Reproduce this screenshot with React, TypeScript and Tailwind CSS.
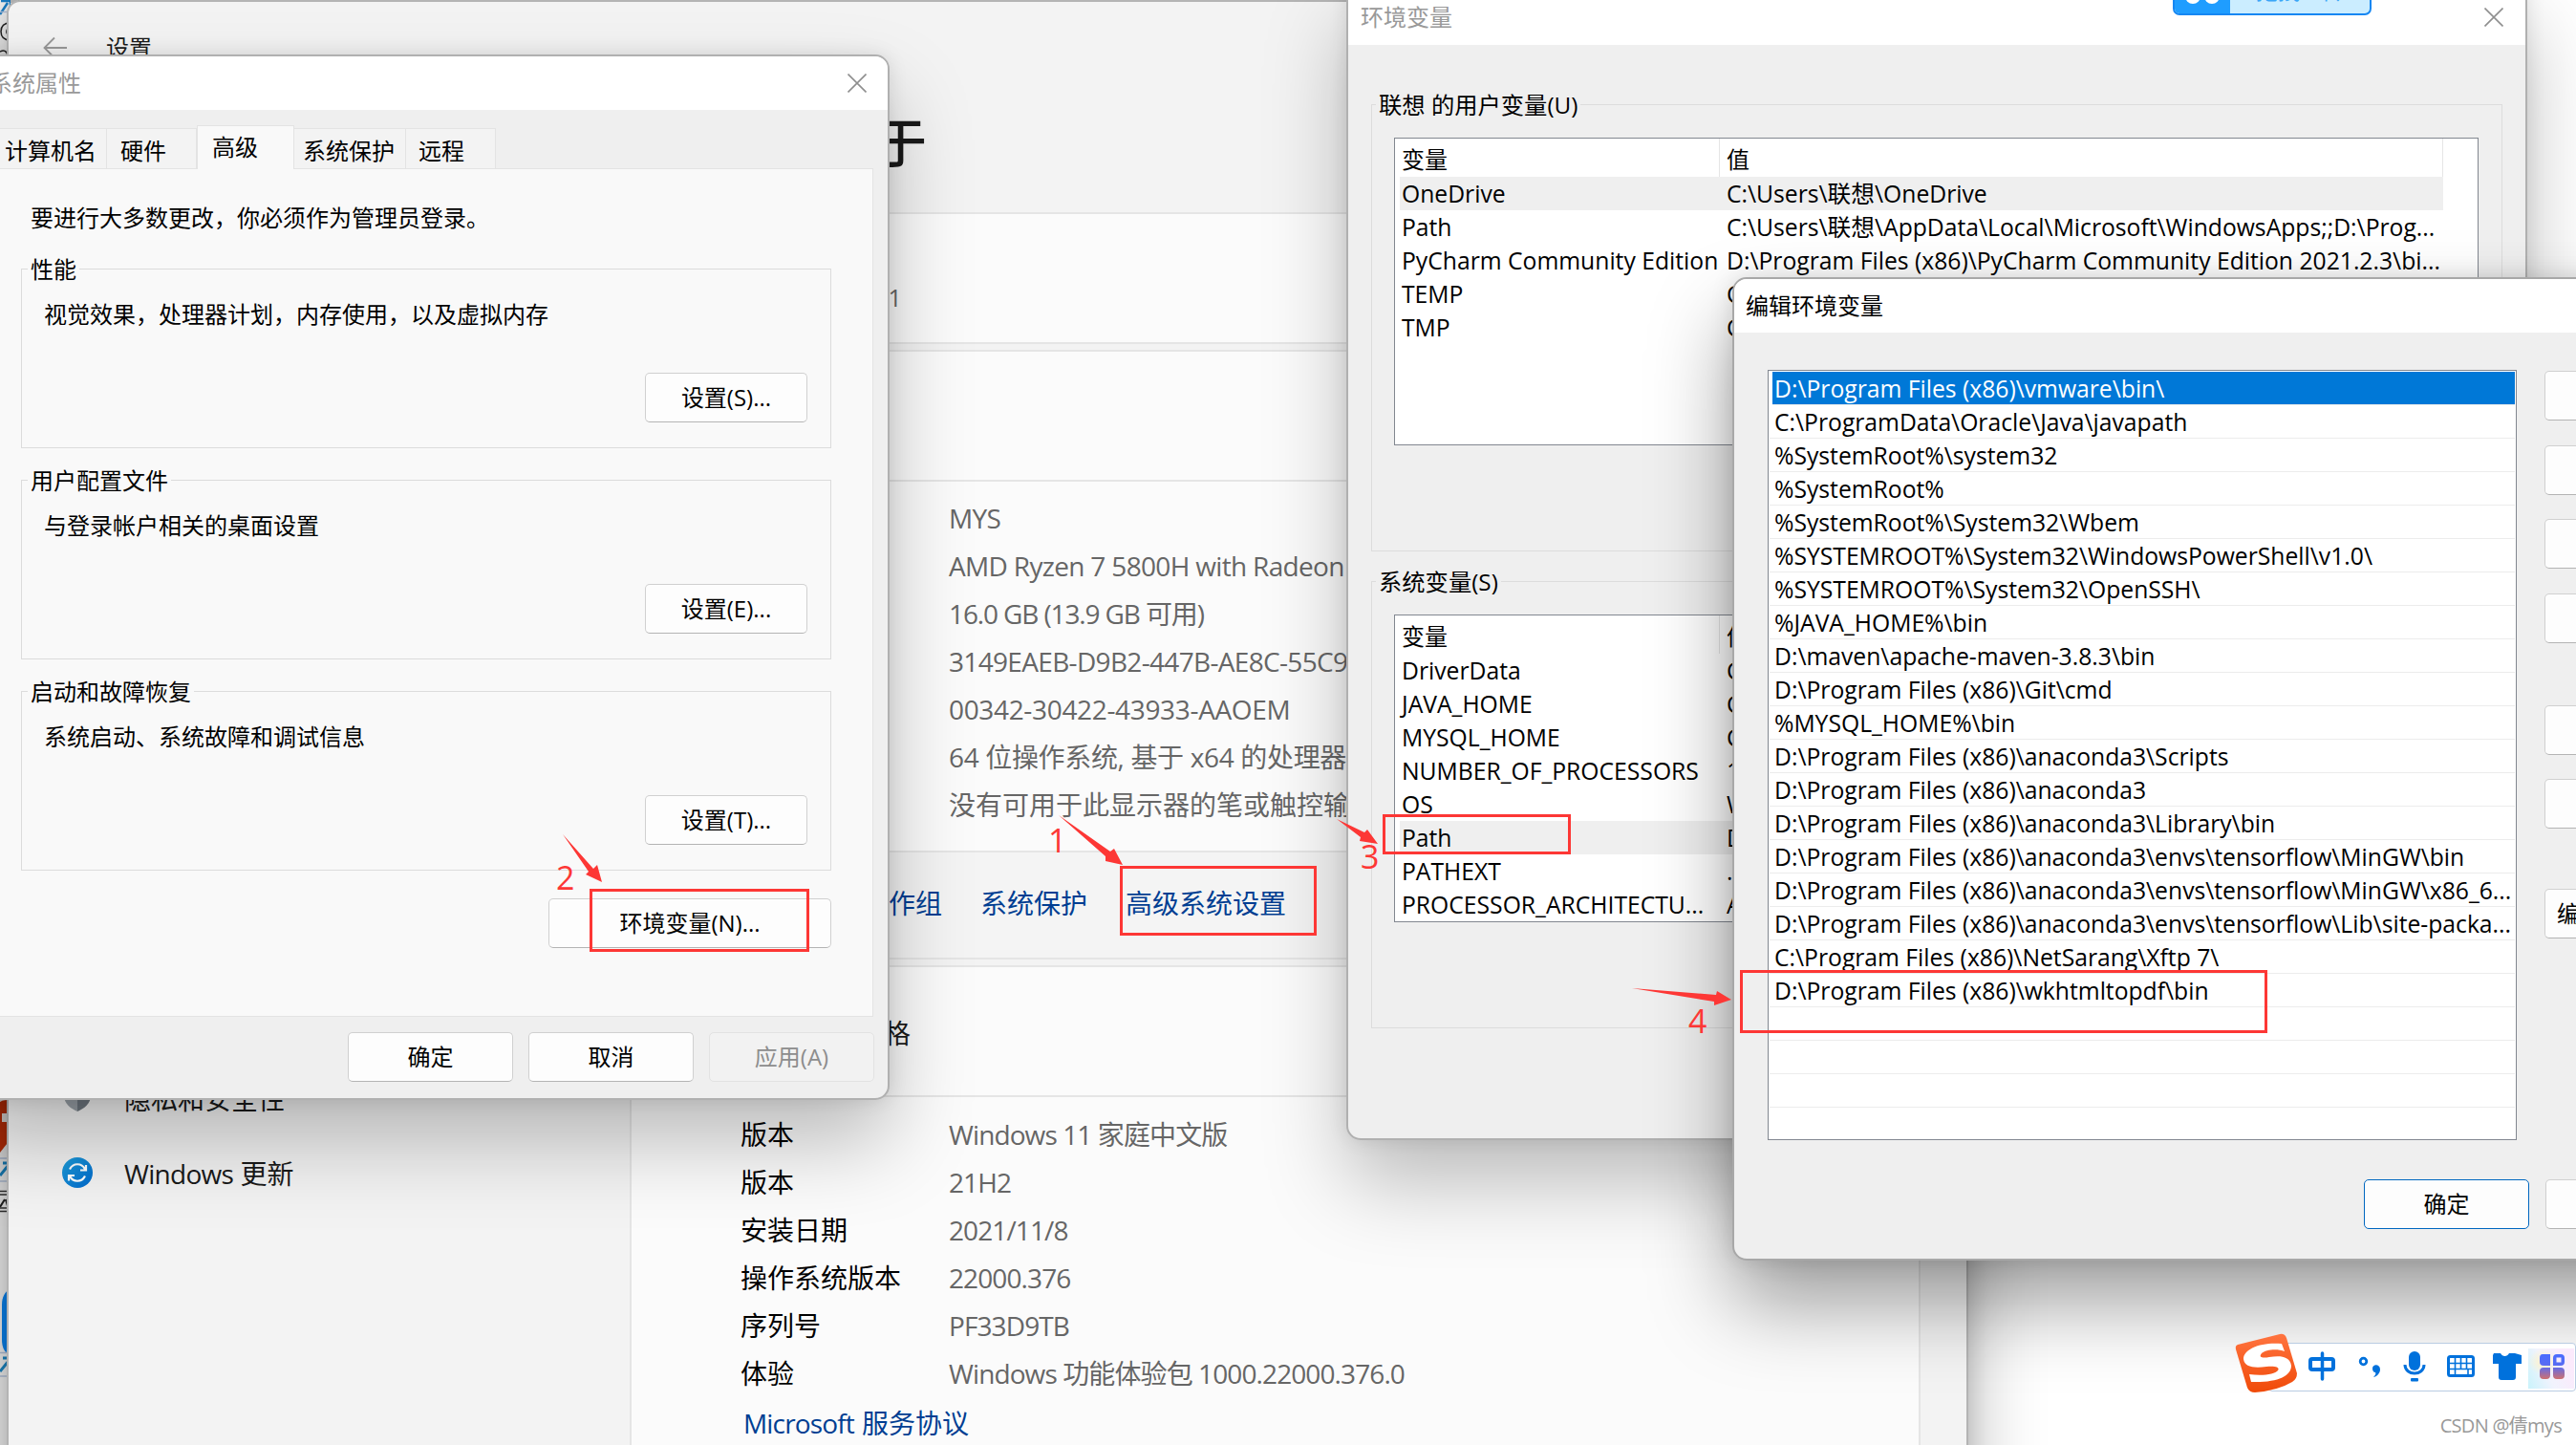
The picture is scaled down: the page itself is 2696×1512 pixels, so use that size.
import type { ReactNode } from "react";
import clsx from "clsx";

const deviceSpecs = [
  { value: "MYS", className: "tracking-[-0.025em]" },
  { value: "AMD Ryzen 7 5800H with Radeon", className: "tracking-[-0.024em]" },
  { value: "16.0 GB (13.9 GB 可用)", className: "tracking-[-0.04em]" },
  { value: "3149EAEB-D9B2-447B-AE8C-55C9", className: "tracking-[-0.024em]" },
  { value: "00342-30422-43933-AAOEM", className: "tracking-[-0.012em]" },
  { value: "64 位操作系统, 基于 x64 的处理器", className: "tracking-[-0.012em]" },
  { value: "没有可用于此显示器的笔或触控输", className: "tracking-normal" },
];

const windowsSpecs = [
  ["版本", "Windows 11 家庭中文版"],
  ["版本", "21H2"],
  ["安装日期", "2021/11/8"],
  ["操作系统版本", "22000.376"],
  ["序列号", "PF33D9TB"],
  ["体验", "Windows 功能体验包 1000.22000.376.0"],
];

const userVariables = [
  ["OneDrive", "C:\\Users\\联想\\OneDrive"],
  ["Path", "C:\\Users\\联想\\AppData\\Local\\Microsoft\\WindowsApps;;D:\\Prog..."],
  [
    "PyCharm Community Edition",
    "D:\\Program Files (x86)\\PyCharm Community Edition 2021.2.3\\bi...",
  ],
  ["TEMP", "C"],
  ["TMP", "C"],
];

const systemVariables = [
  ["DriverData", "C"],
  ["JAVA_HOME", "C"],
  ["MYSQL_HOME", "C"],
  ["NUMBER_OF_PROCESSORS", "1"],
  ["OS", "W"],
  ["Path", "D"],
  ["PATHEXT", ".C"],
  ["PROCESSOR_ARCHITECTU...", "A"],
];

const pathEntries = [
  "D:\\Program Files (x86)\\vmware\\bin\\",
  "C:\\ProgramData\\Oracle\\Java\\javapath",
  "%SystemRoot%\\system32",
  "%SystemRoot%",
  "%SystemRoot%\\System32\\Wbem",
  "%SYSTEMROOT%\\System32\\WindowsPowerShell\\v1.0\\",
  "%SYSTEMROOT%\\System32\\OpenSSH\\",
  "%JAVA_HOME%\\bin",
  "D:\\maven\\apache-maven-3.8.3\\bin",
  "D:\\Program Files (x86)\\Git\\cmd",
  "%MYSQL_HOME%\\bin",
  "D:\\Program Files (x86)\\anaconda3\\Scripts",
  "D:\\Program Files (x86)\\anaconda3",
  "D:\\Program Files (x86)\\anaconda3\\Library\\bin",
  "D:\\Program Files (x86)\\anaconda3\\envs\\tensorflow\\MinGW\\bin",
  "D:\\Program Files (x86)\\anaconda3\\envs\\tensorflow\\MinGW\\x86_6...",
  "D:\\Program Files (x86)\\anaconda3\\envs\\tensorflow\\Lib\\site-packa...",
  "C:\\Program Files (x86)\\NetSarang\\Xftp 7\\",
  "D:\\Program Files (x86)\\wkhtmltopdf\\bin",
  "",
  "",
  "",
  "",
];

const Button = ({
  children,
  className,
}: {
  children?: ReactNode;
  className?: string;
}) => (
  <button
    className={clsx(
      "flex h-[52px] shrink-0 items-center justify-center rounded-[5px] border",
      className ?? "w-[173px] border-[#d0d0d0] border-b-[#b4b4b4] bg-[#fdfdfd]",
    )}
  >
    {children}
  </button>
);

const CloseIcon = () => (
  <svg className="h-5 w-5" viewBox="0 0 20 20" fill="none" stroke="#8f8f8f" strokeWidth="1.6">
    <path d="M0.5 0.5L19.5 19.5M19.5 0.5L0.5 19.5" />
  </svg>
);

const Desktop = () => (
  <>
    <div className="absolute left-0 top-0 flex h-[3px] w-[1411px] bg-[#bdbdbd]">
      <div className="ml-[19px] w-[23px] bg-[#3f8f5e]" />
      <div className="w-[25px] bg-[#c0a04c]" />
      <div className="ml-[84px] w-[14px] bg-[#4f8da8]" />
      <div className="ml-[3px] w-[63px] bg-[#b5b83c]" />
      <div className="ml-[70px] w-[14px] bg-[#4f8da8]" />
      <div className="ml-[3px] w-[27px] bg-[#3d52a0]" />
      <div className="w-[35px] bg-[#333333]" />
      <div className="w-[9px] bg-[#3d52a0]" />
    </div>
    <svg className="absolute left-0 top-0 h-[1512px] w-[11px]" viewBox="0 0 11 1512" fill="none">
      <rect width="11" height="1512" fill="#f4f4f4" />
      <path d="M0 15L8 3M1 1H11V6" stroke="#1a7fc8" strokeWidth="2.5" />
      <path d="M0 12.500H10M0 1212H10M0 1236H10M0 1415.500H10M0 1440H10" stroke="#b4c2dc" strokeWidth="1.500" />
      <path d="M11 24C4 24 1 28 1 33C1 38 4 42 11 42M11 29C6 29 5 37 11 37" stroke="#222" strokeWidth="1.500" />
      <path d="M0 54C4 52 7 53 8 58" stroke="#222" strokeWidth="1.500" />
      <path d="M0 1153C3 1151 7 1151 11 1151V1192L0 1206Z" fill="#c83208" />
      <path d="M2 1165H11V1174H2Z" fill="#f4efec" />
      <path d="M0 1230L9 1219M3 1217H11" stroke="#1b87c5" strokeWidth="3" />
      <path d="M0 1246.500H11M0 1250H11M0 1264H11M0 1267.500H11" stroke="#333" strokeWidth="1.500" />
      <path d="M0 1263L5 1255M6 1255L8 1262L11 1255" stroke="#222" strokeWidth="2" />
      <path d="M11 1348C5 1352 2 1357 2 1365V1402C2 1408 4 1414 7 1415H11Z" fill="#0a84f0" />
      <path d="M0 1435L9 1424M3 1421H11" stroke="#1b87c5" strokeWidth="3" />
    </svg>
  </>
);

const SettingsWindow = () => (
  <div className="absolute left-[7px] top-0 flex h-[1600px] w-[2053px] overflow-hidden rounded-tl-[14px] border-2 border-[#b4b4b4] bg-[#f3f3f3] text-[28px] shadow-[0_30px_80px_rgba(0,0,0,0.3),0_0_24px_rgba(0,0,0,0.15)]">
    <div className="w-[650px] shrink-0">
      <div className="flex h-[95px] items-center gap-10 pl-9">
        <svg className="h-6 w-[26px]" viewBox="0 0 26 24" fill="none" stroke="#999" strokeWidth="1.8">
          <path d="M25 12H2M12 1.500L1.500 12L12 22.500" />
        </svg>
        <span className="text-[24px] text-[#1a1a1a]">设置</span>
      </div>
      <div className="mt-[1014px] flex h-[78px] items-center gap-8 pl-[55px] text-[#1a1a1a]">
        <svg className="h-9 w-[34px]" viewBox="0 0 34 36">
          <path d="M17 0L31 5V14C31 23 24 28 17 31Z" fill="#6f7880" />
          <path d="M17 0L3 5V14C3 23 10 28 17 31Z" fill="#9aa1a8" />
        </svg>
        <span>隐私和安全性</span>
      </div>
      <div className="flex h-[78px] items-center gap-8 pl-[55px] text-[#1a1a1a]">
        <svg className="h-[34px] w-[34px]" viewBox="0 0 34 34" fill="none">
          <defs>
            <linearGradient id="update" x1="0" y1="0" x2="1" y2="1">
              <stop offset="0" stopColor="#1d9fdc" />
              <stop offset="1" stopColor="#0068cc" />
            </linearGradient>
          </defs>
          <circle cx="17" cy="16" r="16" fill="url(#update)" />
          <g stroke="#fff" strokeWidth="2.200">
            <path d="M9 12.500C12.500 5.500 21.500 5.500 25 12.500M26 8V13.500H20" />
            <path d="M25 19.500C21.500 26.500 12.500 26.500 9 19.500M8 24.500V19H14" />
          </g>
        </svg>
        <span>
          <span className="tracking-[-0.025em]">Windows</span> 更新
        </span>
      </div>
    </div>
    <div className="w-[1351px] shrink-0">
      <h1 className="flex h-[220px] items-center pl-[199px] pt-[72px] text-[56px] font-medium text-[#1a1a1a]">
        关于
      </h1>
      <div className="h-[138px] border-2 border-[#e5e5e5] bg-[#fbfbfb] pt-[69px]">
        <p className="w-[282px] text-right text-[25px] tracking-[-0.035em] text-[#666]">21</p>
      </div>
      <div className="mt-[6px] h-[638px] border-2 border-[#e5e5e5] bg-[#fbfbfb]">
        <div className="h-[134px]" />
        <div className="h-[390px] border-y-2 border-[#e5e5e5] pl-[332px] pt-[13px] text-[#666]">
          {deviceSpecs.map(({ value, className }) => (
            <p
              key={value}
              className={clsx("h-[50px] whitespace-nowrap leading-[50px]", className)}
            >
              {value}
            </p>
          ))}
        </div>
        <div className="flex h-[110px] items-center gap-10 bg-[#f4f4f4] pb-[4px] pl-[269px] text-[#003e92]">
          <a>作组</a>
          <a>系统保护</a>
          <a>高级系统设置</a>
        </div>
      </div>
      <div className="mt-[6px] h-[700px] border-2 border-[#e5e5e5] bg-[#fbfbfb]">
        <div className="flex h-[136px] items-center border-b-2 border-[#e5e5e5]">
          <p className="w-[292px] pt-1 text-right text-[#1a1a1a]">格</p>
        </div>
        <div className="pl-[114px] pt-[13.5px]">
          {windowsSpecs.map(([label, value], idx) => (
            <div key={idx} className="flex h-[50px] items-center">
              <span className="w-[218px] shrink-0 text-black">{label}</span>
              <span className="whitespace-nowrap tracking-[-0.032em] text-[#666]">{value}</span>
            </div>
          ))}
          <a className="flex h-[54px] items-center gap-2 pl-[3px] text-[#003e92]">
            <span className="tracking-[-0.03em]">Microsoft</span>服务协议
          </a>
        </div>
      </div>
    </div>
  </div>
);

const tabClass = "flex h-[42px] items-center border border-b-0 border-[#e3e3e3] bg-[#f3f3f3] pt-1";

const SystemGroup = ({
  title,
  text,
  button,
}: {
  title: string;
  text: string;
  button: string;
}) => (
  <fieldset className="mb-[17px] h-[204px] w-[848px] border border-[#dcdcdc]">
    <legend className="ml-[6px] h-8 px-[3px] leading-[33px]">{title}</legend>
    <p className="ml-[23px] mt-4 leading-8">{text}</p>
    <div className="mr-6 mt-[45px] flex justify-end">
      <Button className="w-[170px] border-[#d0d0d0] border-b-[#b4b4b4] bg-[#fdfdfd]">
        {button}
      </Button>
    </div>
  </fieldset>
);

const SystemPropertiesWindow = () => (
  <div className="absolute left-[-41px] top-[57px] flex h-[1094px] w-[972px] flex-col overflow-hidden rounded-[15px] border-2 border-[#b0b0b0] bg-[#efefef] text-[24px] shadow-[0_45px_85px_rgba(0,0,0,0.25),0_0_20px_rgba(0,0,0,0.1)]">
    <div className="flex h-[56px] shrink-0 items-center justify-between bg-white pb-px pl-[28px] pr-[22px] text-[#999]">
      系统属性
      <CloseIcon />
    </div>
    <div className="flex h-[61px] shrink-0 items-end">
      <div className={clsx(tabClass, "w-[151px] pl-[43px]")}>计算机名</div>
      <div className={clsx(tabClass, "w-[94px] border-l-0 pl-[14px]")}>硬件</div>
      <div className="z-10 -mb-px flex h-[46px] w-[102px] items-center border border-b-0 border-[#e3e3e3] bg-[#f9f9f9] pb-[2px] pl-[15px]">
        高级
      </div>
      <div className={clsx(tabClass, "w-[117px] border-l-0 pl-[9px]")}>系统保护</div>
      <div className={clsx(tabClass, "w-[94px] border-l-0 pl-[13px]")}>远程</div>
    </div>
    <div className="mr-[15px] h-[888px] shrink-0 border border-[#e3e3e3] bg-[#f9f9f9] pl-[60px] pt-[33px]">
      <p className="pl-[10px] leading-9">要进行大多数更改，你必须作为管理员登录。</p>
      <div className="pt-[19px]">
        <SystemGroup title="性能" text="视觉效果，处理器计划，内存使用，以及虚拟内存" button="设置(S)..." />
        <SystemGroup title="用户配置文件" text="与登录帐户相关的桌面设置" button="设置(E)..." />
        <SystemGroup title="启动和故障恢复" text="系统启动、系统故障和调试信息" button="设置(T)..." />
      </div>
      <div className="mt-[29px] flex w-[848px] justify-end">
        <Button className="w-[296px] border-[#d0d0d0] border-b-[#b4b4b4] bg-[#fdfdfd]">
          环境变量(N)...
        </Button>
      </div>
    </div>
    <div className="mt-4 flex justify-end gap-4 pr-[14px]">
      <Button>确定</Button>
      <Button>取消</Button>
      <Button className="w-[173px] border-[#e2e2e2] bg-[#f2f2f2] text-[#8d8d8d]">应用(A)</Button>
    </div>
  </div>
);

const VariableGroup = ({
  title,
  rows,
  selected,
}: {
  title: string;
  rows: string[][];
  selected: number;
}) => (
  <fieldset className="mb-[15px] h-[484px] border border-[#dcdcdc]">
    <legend className="ml-1 h-8 px-[3px] text-[24.3px] leading-[34px]">{title}</legend>
    <div className="ml-[23px] mt-[19px] h-[322px] w-[1135px] overflow-hidden border border-[#828790] bg-white">
      <div className="flex h-10 items-center">
        <div className="flex h-full w-[340px] items-center border-r border-[#e5e5e5] pl-[7px] pt-1">
          变量
        </div>
        <div className="flex h-full w-[757px] items-center border-r border-[#e5e5e5] pl-[7px] pt-1">
          值
        </div>
      </div>
      {rows.map(([name, value], idx) => (
        <div
          key={name}
          className={clsx(
            "ml-[5px] flex h-[35px] w-[1092px] items-center whitespace-nowrap pl-[2px] pt-px text-[24.7px]",
            idx === selected && "bg-[#efefef]",
          )}
        >
          <span className="w-[340px] shrink-0">{name}</span>
          <span>{value}</span>
        </div>
      ))}
    </div>
  </fieldset>
);

const EnvironmentWindow = () => (
  <div className="absolute left-[1409px] top-[-20px] h-[1213px] w-[1236px] overflow-hidden rounded-[15px] border-2 border-[#b0b0b0] bg-[#efefef] text-[24px] shadow-[0_45px_85px_rgba(0,0,0,0.25),0_0_20px_rgba(0,0,0,0.1)]">
    <div className="flex h-[65px] items-center justify-between bg-white pl-[13px] pr-[23px] pt-[7px] text-[#999]">
      环境变量
      <CloseIcon />
    </div>
    <div className="mx-6 mt-[46px]">
      <VariableGroup title="联想 的用户变量(U)" rows={userVariables} selected={0} />
      <VariableGroup title="系统变量(S)" rows={systemVariables} selected={5} />
    </div>
  </div>
);

const UploadWidget = () => (
  <div className="absolute left-[2274px] top-[-30px] flex h-[46px] w-[208px] overflow-hidden rounded-[7px] border-2 border-[#1687f2] bg-[#cbedff]">
    <div className="flex w-[58px] items-end justify-center gap-1 bg-[#1f9dff] pb-[10px]">
      <div className="h-4 w-4 rounded-full bg-white" />
      <div className="h-4 w-4 rounded-full bg-white" />
    </div>
    <div className="flex-1 pt-[4px] text-center text-[23px] leading-7 text-[#3aa6f8]">拖拽上传</div>
  </div>
);

const EditWindow = () => (
  <div className="absolute left-[1813px] top-[290px] h-[1029px] w-[1100px] rounded-[15px] border-2 border-[#a8a8a8] bg-[#efefef] text-[24px] shadow-[0_45px_85px_rgba(0,0,0,0.38),0_0_24px_rgba(0,0,0,0.12)]">
    <div className="flex h-[56px] items-center rounded-t-[13px] bg-white pb-px pl-3">编辑环境变量</div>
    <div className="flex gap-[29px] pl-[35px] pt-[39px]">
      <div className="h-[806px] w-[784px] shrink-0 overflow-hidden border border-[#828790] bg-white px-px pt-px text-[24.7px]">
        {pathEntries.map((entry, idx) => (
          <div
            key={idx}
            className={clsx(
              "flex h-[35px] items-center whitespace-nowrap border-b border-[#ececec] pt-[2px]",
              idx === 0 ? "ml-[3px] bg-[#0078d7] pl-[2px] text-white" : "pl-[5px]",
            )}
          >
            {entry}
          </div>
        ))}
      </div>
      <div className="flex flex-col pt-px">
        <div className="flex flex-col gap-[25.5px]">
          <Button />
          <Button />
          <Button />
          <Button />
        </div>
        <div className="mt-[65px] flex flex-col gap-[25px]">
          <Button />
          <Button />
        </div>
        <div className="mt-[63px]">
          <Button className="w-[173px] justify-start border-[#d0d0d0] border-b-[#b4b4b4] bg-[#fdfdfd] pl-3">
            编辑
          </Button>
        </div>
      </div>
    </div>
    <div className="mt-[41px] flex gap-[17px] pl-[659px]">
      <Button className="w-[173px] border-[#0067c0] bg-[#fdfdfd]">确定</Button>
      <Button />
    </div>
  </div>
);

const InputMethodBar = () => (
  <div className="absolute right-0 top-[1405px] flex h-[51px] w-[322px] rounded-[4px] border-[1.5px] border-[#b9cce2] bg-white">
    <svg className="absolute left-[-37px] top-[-12px] h-16 w-[68px]" viewBox="0 0 68 64">
      <defs>
        <linearGradient id="sogou" x1="0" y1="0" x2="0" y2="1">
          <stop offset="0" stopColor="#ff7440" />
          <stop offset="1" stopColor="#f04a08" />
        </linearGradient>
      </defs>
      <path
        d="M4 13L48 2Q53 1 55 6L66 43Q66 49 61 52Q46 61 22 63Q16 63 14 58L2 18Q1 14 4 13Z"
        fill="url(#sogou)"
      />
      <path
        d="M50 12L53 20C46 17 33 18 29 22C25 27 31 27 37 26C48 24 59 25 60 35C60 46 45 53 18 52L16 44C30 46 43 44 46 40C49 36 41 35 34 36C20 38 11 36 10 28C10 17 29 10 50 12Z"
        fill="#fff"
      />
    </svg>
    <svg className="absolute left-[32px] top-0 h-[48px] w-[288px]" viewBox="0 0 288 48" fill="none">
      <defs>
        <linearGradient id="apps" x1="0" y1="0" x2="0" y2="1">
          <stop offset="0" stopColor="#4a6cff" />
          <stop offset="0.5" stopColor="#5b6cf0" />
          <stop offset="1" stopColor="#d0706e" />
        </linearGradient>
        <linearGradient id="glow" x1="0" y1="1" x2="1" y2="0.6">
          <stop offset="0" stopColor="#c9f3fb" />
          <stop offset="0.5" stopColor="#f1f3fd" />
          <stop offset="1" stopColor="#fbeafc" />
        </linearGradient>
        <radialGradient id="sun">
          <stop offset="0" stopColor="#fff2c8" />
          <stop offset="1" stopColor="#fff2c8" stopOpacity="0" />
        </radialGradient>
      </defs>
      <rect x="239" y="5" width="48" height="42" fill="url(#glow)" />
      <rect x="239" y="5" width="32" height="28" fill="url(#sun)" />
      <g stroke="#0071dc" strokeWidth="4">
        <rect x="11" y="16" width="24" height="11" rx="2" />
        <path d="M23.500 10V37" strokeLinecap="round" strokeWidth="3.500" />
        <circle cx="66.500" cy="18.500" r="3.300" strokeWidth="2.800" />
      </g>
      <path d="M76 26C76 21 84 21 84 27C84 31 80 35 77 35C79 33 80 31 79 30C77 30 76 28 76 26Z" fill="#0071dc" />
      <rect x="114" y="8" width="12" height="20" rx="6" fill="#0071dc" />
      <path d="M110 22C110 34 130 34 130 22" stroke="#0071dc" strokeWidth="3" />
      <rect x="116" y="36" width="8" height="3.500" rx="1" fill="#0071dc" />
      <rect x="155.500" y="13.500" width="26" height="20" rx="2" stroke="#0071dc" strokeWidth="3" />
      <path
        d="M157 20.500H180M157 26.500H180M162.500 15V27M168.500 15V27M174.500 15V27M162.500 27V32M176 27V32"
        stroke="#0071dc"
        strokeWidth="1.600"
      />
      <path
        d="M203 10H210C212 14 217 14 219 10H225L232 12V21H226V35Q226 38 223 38H211Q208 38 208 35V21H202V12Z"
        fill="#0071dc"
      />
      <path
        fill="url(#apps)"
        fillRule="evenodd"
        d="M254 11H262V23H255Q251 23 251 19V15Q251 11 254 11ZM265 15Q265 11 269 11H273Q277 11 277 15V19Q277 23 273 23H265ZM268.500 14.500V19.500H273.500V14.500ZM255 25H262V33Q262 37 258 37H255Q251 37 251 33V29Q251 25 255 25ZM265 25H273Q277 25 277 29V33Q277 37 273 37H269Q265 37 265 33Z"
      />
    </svg>
  </div>
);

// red callouts that number the four steps
const Annotations = () => (
  <>
    <div className="absolute left-[1172px] top-[906px] h-[73px] w-[206px] border-3 border-[#fd3735]" />
    <div className="absolute left-[617px] top-[930px] h-[66px] w-[230px] border-3 border-[#fd3735]" />
    <div className="absolute left-[1447px] top-[852px] h-[42px] w-[197px] border-3 border-[#fd3735]" />
    <div className="absolute left-[1821px] top-[1015px] h-[66px] w-[552px] border-3 border-[#fd3735]" />
    <svg
      className="absolute left-0 top-0 h-[1512px] w-[2696px]"
      viewBox="0 0 2696 1512"
      fill="#fd3735"
    >
      <path d="M1108 853L1162 891L1166 888L1175 905L1157 901L1157 896Z" />
      <path d="M589 873L621 909L625 905L630 923L613 915L616 912Z" />
      <path d="M1399 857L1428 871L1431 868L1442 883L1423 880L1424 876Z" />
      <path d="M1708 1034L1796 1041L1797 1037L1812 1046L1794 1052L1794 1048Z" />
    </svg>
    <div className="text-[34px] leading-[34px] text-[#fd3735]">
      <span className="absolute left-[1097px] top-[862px]">1</span>
      <span className="absolute left-[582px] top-[901px]">2</span>
      <span className="absolute left-[1424px] top-[879px]">3</span>
      <span className="absolute left-[1767px] top-[1051px]">4</span>
    </div>
  </>
);

const App = () => {
  return (
    <div className="relative h-[1512px] w-[2696px] overflow-hidden bg-white font-['Open_Sans','Noto_Sans_CJK_SC',sans-serif] leading-normal text-black">
      <Desktop />
      <SettingsWindow />
      <SystemPropertiesWindow />
      <EnvironmentWindow />
      <UploadWidget />
      <EditWindow />
      <InputMethodBar />
      <Annotations />
      <span className="absolute right-[15px] top-[1477px] text-[20px] leading-[30px] tracking-[-0.035em] text-[#999]">
        CSDN @倩mys
      </span>
    </div>
  );
};

export default App;
